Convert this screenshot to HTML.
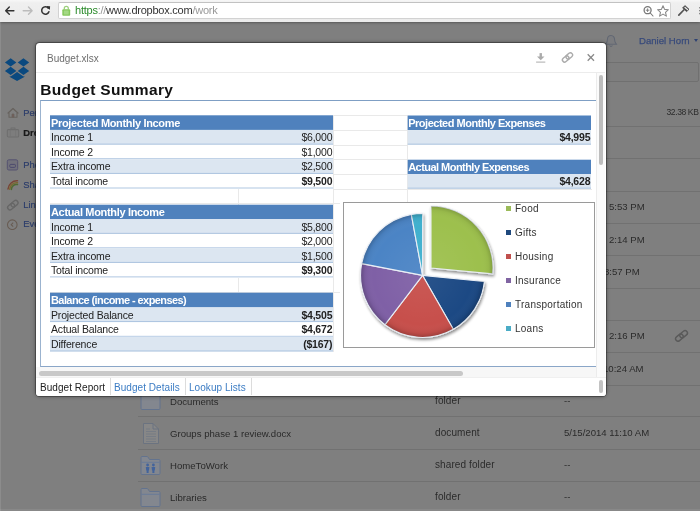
<!DOCTYPE html>
<html>
<head>
<meta charset="utf-8">
<title>Budget.xlsx - Dropbox</title>
<style>
html,body{margin:0;padding:0;}
body{width:700px;height:511px;overflow:hidden;position:relative;background:#fff;font-family:"Liberation Sans",sans-serif;}
.abs{position:absolute;}
#toolbar,#page,#minner{will-change:transform;}
/* ---------- browser toolbar ---------- */
#toolbar{position:absolute;left:0;top:0;width:700px;height:22px;background:linear-gradient(#f7f7f7 0,#efefef 3px,#ebebeb 100%);z-index:30;box-sizing:border-box;box-shadow:0 0 3px rgba(0,0,0,0.55);}
#addr{position:absolute;left:58px;top:2px;width:613px;height:17px;box-sizing:border-box;background:#fff;border:1px solid #d2d2d2;border-top-color:#c2c2c2;border-radius:2px;}
#url{position:absolute;left:75px;top:4px;font-size:11px;letter-spacing:-0.24px;line-height:13px;color:#333;white-space:nowrap;}
#url .g{color:#2a8a2a;}
#url .s{color:#999;}
/* ---------- page under overlay ---------- */
#page{position:absolute;left:0;top:22px;width:700px;height:489px;background:#fff;z-index:1;overflow:hidden;}
#overlay{position:absolute;left:0;top:22px;width:700px;height:489px;background:rgba(0,0,0,0.5);z-index:10;}
.sep{position:absolute;left:138px;width:562px;height:1px;background:#e3e3e3;}
.nav{position:absolute;left:23.300px;font-size:9.400px;line-height:12px;color:#587ad4;-webkit-text-stroke:0.2px;white-space:nowrap;}
.fn{position:absolute;left:170px;font-size:9.6px;line-height:12px;color:#555;white-space:nowrap;margin-top:1px}
.kind{position:absolute;left:435px;font-size:10px;letter-spacing:0.1px;line-height:12px;color:#575757;white-space:nowrap;}
.mod{position:absolute;font-size:9.6px;line-height:12px;color:#575757;white-space:nowrap;}
/* ---------- modal ---------- */
#modal{position:absolute;left:35.850px;top:43.300px;width:569.750px;height:352.300px;background:#fff;border-radius:3.500px;z-index:20;box-shadow:0 0 0 1px rgba(0,0,0,0.3),0 0 4px rgba(0,0,0,0.5);overflow:hidden;}
#minner{position:absolute;left:0.150px;top:0.800px;width:569px;height:352px;}
#mtitle{position:absolute;left:11px;top:8.7px;font-size:10px;line-height:12px;color:#6e6e6e;}
#mhr{position:absolute;left:0;top:28px;width:569px;height:1px;background:#ececec;}
#h1{position:absolute;left:4.300px;top:36px;font-size:15.500px;letter-spacing:0.330px;line-height:19px;font-weight:bold;color:#111;white-space:nowrap;}
#frame{position:absolute;left:4px;top:56px;width:556px;height:267px;box-sizing:border-box;border-top:1px solid #7f9fc4;border-left:1px solid #9bb3cf;border-bottom:1px solid #8aa6c8;}
table.t{position:absolute;border-collapse:collapse;table-layout:fixed;font-size:10.5px;}
table.t td{padding:1.5px 0.5px 0 1px;height:14.6px;line-height:12px;box-sizing:border-box;border-bottom:1px solid #b4c9e3;color:#222;white-space:nowrap;overflow:hidden;letter-spacing:-0.1px;}
table.t tr.h td{background:#4f81bd;color:#fff;font-weight:bold;font-size:11px;letter-spacing:-0.33px;border-bottom:none;padding-top:1px;}
table.t tr.b td{background:#dce6f1;}
table.t td.r{text-align:right;letter-spacing:-0.2px;}
table.t td.bd{font-weight:bold;}
.grid{position:absolute;background:#e9e9e9;}
text.th{font:bold 11px "Liberation Sans",sans-serif;fill:#fff;letter-spacing:-0.33px;}
text.td{font:10.5px "Liberation Sans",sans-serif;fill:#222;letter-spacing:-0.16px;}
text.tv{font:10.5px "Liberation Sans",sans-serif;fill:#222;letter-spacing:-0.2px;text-anchor:end;}
text.tv.b{font-weight:bold;}
#chart{position:absolute;left:307px;top:158px;width:252px;height:146px;box-sizing:border-box;border:1px solid #9a9a9a;background:#fff;}
.lg{position:absolute;left:515px;font-size:10px;letter-spacing:0.25px;line-height:12px;color:#333;white-space:nowrap;}
.lgs{position:absolute;left:506px;width:5.300px;height:5.300px;margin-top:0.200px}
#tabs{position:absolute;left:0;top:333px;width:570px;height:20px;background:#fff;border-top:1px solid #f0f0f0;box-sizing:border-box}
.tab{position:absolute;top:3.500px;letter-spacing:0.05px;font-size:10px;line-height:12px;white-space:nowrap;color:#3b7cc4;}
.tsep{position:absolute;top:0;width:1px;height:17px;background:#dcdcdc;}
</style>
</head>
<body>

<!-- ================= browser toolbar ================= -->
<div id="toolbar">
  <svg class="abs" style="left:0;top:0" width="58" height="22" viewBox="0 0 58 22">
    <g fill="none" stroke-linecap="round" stroke-linejoin="round">
      <path d="M13.900,10.700H6M9.300,7.100L5.700,10.700L9.300,14.300" stroke="#333" stroke-width="1.400"/>
      <path d="M23.200,10.700H31.800M28.500,7.100L32.100,10.700L28.500,14.300" stroke="#bcbcbc" stroke-width="1.400"/>
      <path d="M48.300,8.200A3.700,3.700 0 1 0 48.900,11.700" stroke="#333" stroke-width="1.500"/>
    </g>
    <path d="M46.300,6L50.100,6.200L49.900,10.100Z" fill="#333"/>
  </svg>
  <div id="addr"></div>
  <svg class="abs" style="left:61px;top:4px" width="11" height="14" viewBox="0 0 11 14">
    <path d="M3.3,5.600V4.300A2,2 0 0 1 7.300,4.300V5.600" fill="none" stroke="#9ccf7c" stroke-width="1.300"/>
    <rect x="1.300" y="5.200" width="7.900" height="6.600" rx="1" fill="#86c85c"/>
    <rect x="2.800" y="6.600" width="4.900" height="3.800" rx="0.500" fill="#a4d884"/>
  </svg>
  <div id="url"><span class="g">https</span><span class="s">://</span>www.dropbox.com<span class="s">/work</span></div>
  <svg class="abs" style="left:642px;top:4px" width="58" height="14" viewBox="0 0 58 14">
    <g fill="none" stroke="#777" stroke-width="1.1" stroke-linecap="round">
      <circle cx="5.600" cy="6.200" r="3.500" stroke-width="1.300"/>
      <path d="M8.3,9L11,12"/>
      <path d="M4.2,6.2H7M5.6,4.8V7.6" stroke-width="0.9"/>
      <path d="M21,1.8L22.6,5.4L26.4,5.7L23.5,8.3L24.4,12.1L21,10.1L17.6,12.1L18.5,8.3L15.6,5.7L19.4,5.4Z" stroke="#8a8a8a" stroke-linejoin="round"/>
    </g>
    <g>
      <path d="M36.800,11.200L41.800,6" stroke="#555" stroke-width="1.700" stroke-linecap="round"/>
      <path d="M42.900,1.600L47,5.300L44.600,7.600L40.600,4Z" fill="#4a4a4a" stroke="#4a4a4a" stroke-width="0.800" stroke-linejoin="round"/>
      <path d="M43,3.500L45.500,5.600" stroke="#f4f4f4" stroke-width="1.200" stroke-linecap="round"/>
      <rect x="57" y="3.100" width="1.400" height="1.300" fill="#8a8a8a"/><rect x="57" y="6" width="1.400" height="1.300" fill="#8a8a8a"/><rect x="57" y="8.900" width="1.400" height="1.400" fill="#8a8a8a"/>
    </g>
  </svg>
</div>

<!-- ================= dropbox page (dimmed) ================= -->
<div id="page">
  <!-- logo -->
  <svg class="abs" style="left:4px;top:35px" width="26" height="25" viewBox="0 0 26 25">
    <g fill="#1592ff">
      <path d="M6.650,1.200L12.400,5.500L6.650,9.600L0.900,5.500Z"/>
      <path d="M19.450,1.200L25.200,5.500L19.450,9.600L13.700,5.500Z"/>
      <path d="M6.650,9.800L12.400,13.900L6.650,18L0.900,13.900Z"/>
      <path d="M19.450,9.800L25.200,13.900L19.450,18L13.700,13.900Z"/>
      <path d="M5.800,18.900L6.650,19.400L13.050,15L19.450,19.400L20.300,18.900L20.300,19.900L13.050,24L5.800,19.900Z"/>
    </g>
  </svg>
  <!-- sidebar -->
  <svg class="abs" style="left:6px;top:84px" width="16" height="124" viewBox="0 0 16 124">
    <g fill="none" stroke="#cfc6bd" stroke-width="1.1" stroke-linejoin="round">
      <path d="M1.6,7.4L7,2.6L12.400,7.400" stroke-width="1.400"/>
      <path d="M3,7V11.200H11V7"/>
      <rect x="6" y="8" width="2" height="3.200" fill="#e8b8b0" stroke-width="0.800"/>
      <rect x="1.300" y="23.600" width="11.400" height="7.400" rx="1" fill="#fbfbfb" stroke="#dcdcdc"/>
      <path d="M5,23.600V22H9V23.600" stroke="#dcdcdc"/>
      <path d="M4.300,23.600V31M9.700,23.600V31" stroke="#e6e6e6" stroke-width="0.800"/>
    </g>
    <rect x="1.300" y="53.800" width="10.400" height="10.200" rx="1.500" fill="#e4e3f6" stroke="#a9a4e0" stroke-width="1"/>
    <rect x="3.800" y="58.400" width="5.600" height="3" rx="0.800" fill="none" stroke="#8f89d6" stroke-width="0.900"/>
    <g fill="none" stroke-width="1.500" stroke-linecap="round">
      <path d="M2,83A9,9 0 0 1 11.500,74.800" stroke="#f08a6a"/>
      <path d="M3.700,83.300A7,7 0 0 1 11.500,76.700" stroke="#f6d060"/>
      <path d="M5.400,83.600A5,5 0 0 1 11.500,78.600" stroke="#9ed468"/>
    </g>
    <g fill="none" stroke="#cdcdcd" stroke-width="1.400">
      <rect x="-1" y="-2.400" width="7.600" height="4.800" rx="2.400" transform="translate(3,102.400) rotate(-40)"/>
      <rect x="-1" y="-2.400" width="7.600" height="4.800" rx="2.400" transform="translate(6.400,99.500) rotate(-40)"/>
    </g>
    <circle cx="6.300" cy="118.700" r="4.800" fill="none" stroke="#d0b8a6" stroke-width="1.100"/>
    <path d="M7.200,116.700L5.200,118.700L7.200,120.700" fill="none" stroke="#d0b8a6" stroke-width="1.100"/>
  </svg>
  <div class="nav" style="top:85.300px">Personal</div>
  <div class="nav" style="top:105px;color:#333;font-weight:bold">Dropbox</div>
  <div class="nav" style="top:136.500px">Photos</div>
  <div class="nav" style="top:156.500px">Sharing</div>
  <div class="nav" style="top:176.500px">Links</div>
  <div class="nav" style="top:196px">Events</div>

  <!-- header right -->
  <svg class="abs" style="left:604px;top:12px" width="14" height="14" viewBox="0 0 14 14">
    <path d="M7,1.5C4.4,1.5 3.4,3.6 3.4,5.8C3.4,8.2 2.4,9.2 1.6,10.2H12.4C11.6,9.2 10.6,8.2 10.6,5.8C10.6,3.6 9.6,1.5 7,1.5Z" fill="#f4f7fc" stroke="#c4cfe6" stroke-width="1.100"/>
    <path d="M5.6,11.4A1.5,1.5 0 0 0 8.4,11.4" fill="none" stroke="#c4cfe6" stroke-width="1.100"/>
  </svg>
  <div class="abs" style="left:639px;top:13px;font-size:9.6px;line-height:12px;color:#7094f4;-webkit-text-stroke:0.250px #7094f4;white-space:nowrap;">Daniel Horn</div>
  <div class="abs" style="left:694px;top:17px;width:0;height:0;border-left:2.6px solid transparent;border-right:2.6px solid transparent;border-top:3.4px solid #5f86e6;"></div>
  <div class="abs" style="left:560px;top:40px;width:139px;height:20px;box-sizing:border-box;border:1px solid #e0e0e0;border-radius:2px;background:#fcfcfc"></div>
  <div class="mod" style="left:666.500px;top:84px;font-size:8.600px;letter-spacing:-0.420px;color:#5a5a5a">32.38 KB</div>

  <!-- rows -->
  <div class="sep" style="top:104px"></div>
  <div class="sep" style="top:136px"></div>
  <div class="sep" style="top:169px"></div>
  <div class="sep" style="top:201px"></div>
  <div class="sep" style="top:233px"></div>
  <div class="sep" style="top:266px"></div>
  <div class="sep" style="top:298px"></div>
  <div class="sep" style="top:330px"></div>
  <div class="sep" style="top:363px"></div>
  <div class="sep" style="top:394px"></div>
  <div class="sep" style="top:427px"></div>
  <div class="sep" style="top:459px"></div>

  <div class="mod" style="left:609px;top:179px">5:53 PM</div>
  <div class="mod" style="left:609px;top:212px">2:14 PM</div>
  <div class="mod" style="left:604px;top:244px">8:57 PM</div>
  <div class="mod" style="left:600px;top:276px">--</div>
  <div class="mod" style="left:609px;top:308px">2:16 PM</div>
  <div class="mod" style="left:603px;top:341px">10:24 AM</div>
  <svg class="abs" style="left:674px;top:307px" width="15" height="14" viewBox="0 0 15 14">
    <g fill="none" stroke="#b4b4b4" stroke-width="1.5">
      <rect x="-4.2" y="-2.4" width="8.4" height="4.8" rx="2.4" transform="translate(5.4,8.6) rotate(-40)"/>
      <rect x="-4.2" y="-2.4" width="8.4" height="4.8" rx="2.4" transform="translate(9.6,5.2) rotate(-40)"/>
    </g>
  </svg>

  <!-- file rows -->
  <div class="fn" style="top:373px">Documents</div>
  <div class="fn" style="top:405px">Groups phase 1 review.docx</div>
  <div class="fn" style="top:437px">HomeToWork</div>
  <div class="fn" style="top:469px">Libraries</div>
  <div class="kind" style="top:373px">folder</div>
  <div class="kind" style="top:405px">document</div>
  <div class="kind" style="top:437px">shared folder</div>
  <div class="kind" style="top:469px">folder</div>
  <div class="mod" style="left:564px;top:373px">--</div>
  <div class="mod" style="left:564px;top:405px">5/15/2014 11:10 AM</div>
  <div class="mod" style="left:564px;top:437px">--</div>
  <div class="mod" style="left:564px;top:469px">--</div>
</div>
<div id="overlay"></div>
<svg class="abs" style="left:140px;top:382px;z-index:12" width="22" height="130" viewBox="0 0 22 130">
  <g fill="#83878f" stroke="#63738e" stroke-width="1">
    <path d="M1,4.500V26.500Q1,27.500 2,27.500H19Q20,27.500 20,26.500V8.500Q20,7.500 19,7.500H9.500L8,5Q7.600,4.500 7,4.500H2Q1,4.500 1,5.500Z"/>
    <path d="M1,5.500V21.500Q1,22.500 2,22.500H19Q20,22.500 20,21.500V8.500Q20,7.500 19,7.500H9.500L8,5Q7.600,4.500 7,4.500H2Q1,4.500 1,5.500Z" transform="translate(0,70)"/>
    <path d="M1,5.500V21.500Q1,22.500 2,22.500H19Q20,22.500 20,21.500V8.500Q20,7.500 19,7.500H9.500L8,5Q7.600,4.500 7,4.500H2Q1,4.500 1,5.500Z" transform="translate(0,102)"/>
  </g>
  <path d="M1.500,80.300H19.500M1.500,112.300H19.500" stroke="#66799a" stroke-width="0.900" fill="none"/>
  <path d="M3.500,41.500H13L18.500,47V61.500H3.500Z" fill="#878787" stroke="#6b7380" stroke-width="1"/>
  <path d="M13,41.500V47H18.500" fill="none" stroke="#6b7380" stroke-width="1"/>
  <path d="M6,47H10M6,49.500H16M6,52H16M6,54.500H16M6,57H16M6,59.500H16" stroke="#747a84" stroke-width="0.900" fill="none"/>
  <g fill="#42639c">
    <circle cx="7.600" cy="83" r="1.400"/><path d="M5.800,85H9.400L9,88.500H8.600V91H6.600V88.500H6.200Z"/>
    <circle cx="13.400" cy="83" r="1.400"/><path d="M11.600,85H15.200L14.800,88.500H14.400V91H12.400V88.500H12Z"/>
  </g>
</svg>

<div class="abs" style="left:0;top:22px;width:1px;height:489px;background:rgba(255,255,255,0.1);z-index:11"></div>
<div class="abs" style="left:0;top:509px;width:700px;height:2px;background:rgba(255,255,255,0.07);z-index:11"></div>

<!-- ================= preview modal ================= -->
<div id="modal"><div id="minner">
  <div id="mtitle">Budget.xlsx</div>
  <svg class="abs" style="left:498px;top:7px" width="64" height="14" viewBox="0 0 64 14">
    <g fill="none" stroke="#ababab" stroke-width="1.2">
      <path d="M2.100,11.100H11.300" stroke-width="1"/>
      <path d="M6.750,2.100V6" stroke-width="2.400"/>
      <path d="M3,5.400L6.750,9.200L10.500,5.400Z" fill="#ababab" stroke="none"/>
      <rect x="-3.600" y="-2.200" width="7.200" height="4.400" rx="2.200" stroke-width="1.400" transform="translate(31.700,8) rotate(-40)"/>
      <rect x="-3.600" y="-2.200" width="7.200" height="4.400" rx="2.200" stroke-width="1.400" transform="translate(35.300,4.900) rotate(-40)"/>
      <path d="M53.700,3.300L60,9.700M60,3.300L53.700,9.700" stroke="#8a8a8a" stroke-width="1.300"/>
    </g>
  </svg>
  <div id="mhr"></div>
  <div id="h1">Budget Summary</div>
  <div id="frame"></div>

  <!-- faint sheet gridlines -->
  <div class="grid" style="left:297px;top:71px;width:1px;height:237px"></div>
  <div class="grid" style="left:371px;top:71px;width:1px;height:87px"></div>
  <div class="grid" style="left:14px;top:159px;width:290px;height:1px"></div>
  <div class="grid" style="left:14px;top:248px;width:290px;height:1px"></div>
  <div class="grid" style="left:202px;top:145px;width:1px;height:16px"></div>
  <div class="grid" style="left:202px;top:234px;width:1px;height:15px"></div>
  <div class="grid" style="left:298px;top:71px;width:74px;height:1px"></div>
  <div class="grid" style="left:298px;top:86px;width:74px;height:1px"></div>
  <div class="grid" style="left:298px;top:101px;width:74px;height:1px"></div>
  <div class="grid" style="left:298px;top:115px;width:74px;height:1px"></div>
  <div class="grid" style="left:298px;top:130px;width:74px;height:1px"></div>
  <div class="grid" style="left:298px;top:145px;width:258px;height:1px"></div>

  <!-- tables -->
  <!-- TABLES-START -->
  <svg class="abs" style="left:0;top:0" width="569" height="351" viewBox="0 0 569 351">
    <rect x="14" y="71.3" width="283" height="14.63" fill="#4f81bd"/>
    <text class="th" x="15" y="82.6">Projected Monthly Income</text>
    <rect x="14" y="85.93" width="283" height="14.63" fill="#dce6f1"/>
    <rect x="14" y="99.66" width="283" height="0.9" fill="#a7c0de"/>
    <text class="td" x="15" y="97.23">Income 1</text>
    <text class="tv" x="296.3" y="97.23">$6,000</text>
    <rect x="14" y="114.29" width="283" height="0.9" fill="#a7c0de"/>
    <text class="td" x="15" y="111.86">Income 2</text>
    <text class="tv" x="296.3" y="111.86">$1,000</text>
    <rect x="14" y="115.19" width="283" height="14.63" fill="#dce6f1"/>
    <rect x="14" y="128.92" width="283" height="0.9" fill="#a7c0de"/>
    <text class="td" x="15" y="126.49">Extra income</text>
    <text class="tv" x="296.3" y="126.49">$2,500</text>
    <rect x="14" y="143.55" width="283" height="0.9" fill="#a7c0de"/>
    <text class="td" x="15" y="141.12">Total income</text>
    <text class="tv b" x="296.3" y="141.12">$9,500</text>
    <rect x="14" y="160.7" width="283" height="14.53" fill="#4f81bd"/>
    <text class="th" x="15" y="172">Actual Monthly Income</text>
    <rect x="14" y="175.23" width="283" height="14.53" fill="#dce6f1"/>
    <rect x="14" y="188.86" width="283" height="0.9" fill="#a7c0de"/>
    <text class="td" x="15" y="186.53">Income 1</text>
    <text class="tv" x="296.3" y="186.53">$5,800</text>
    <rect x="14" y="203.39" width="283" height="0.9" fill="#a7c0de"/>
    <text class="td" x="15" y="201.06">Income 2</text>
    <text class="tv" x="296.3" y="201.06">$2,000</text>
    <rect x="14" y="204.29" width="283" height="14.53" fill="#dce6f1"/>
    <rect x="14" y="217.92" width="283" height="0.9" fill="#a7c0de"/>
    <text class="td" x="15" y="215.59">Extra income</text>
    <text class="tv" x="296.3" y="215.59">$1,500</text>
    <rect x="14" y="232.45" width="283" height="0.9" fill="#a7c0de"/>
    <text class="td" x="15" y="230.12">Total income</text>
    <text class="tv b" x="296.3" y="230.12">$9,300</text>
    <rect x="14" y="248.7" width="283" height="14.68" fill="#4f81bd"/>
    <text class="th" style="letter-spacing:-0.59px" x="15" y="260">Balance (income - expenses)</text>
    <rect x="14" y="263.38" width="283" height="14.68" fill="#dce6f1"/>
    <rect x="14" y="277.16" width="283" height="0.9" fill="#a7c0de"/>
    <text class="td" x="15" y="274.68">Projected Balance</text>
    <text class="tv b" x="296.3" y="274.68">$4,505</text>
    <rect x="14" y="291.84" width="283" height="0.9" fill="#a7c0de"/>
    <text class="td" x="15" y="289.36">Actual Balance</text>
    <text class="tv b" x="296.3" y="289.36">$4,672</text>
    <rect x="14" y="292.74" width="283" height="14.68" fill="#dce6f1"/>
    <rect x="14" y="306.52" width="283" height="0.9" fill="#a7c0de"/>
    <text class="td" x="15" y="304.04">Difference</text>
    <text class="tv b" x="296.3" y="304.04">($167)</text>
    <rect x="371.7" y="71.5" width="183.3" height="14.55" fill="#4f81bd"/>
    <text class="th" style="letter-spacing:-0.48px" x="372.2" y="82.8">Projected Monthly Expenses</text>
    <rect x="371.7" y="86.05" width="183.3" height="14.55" fill="#dce6f1"/>
    <rect x="371.7" y="99.7" width="183.3" height="0.9" fill="#a7c0de"/>
    <text class="tv b" x="554.3" y="97.35">$4,995</text>
    <rect x="371.7" y="115.7" width="183.3" height="14.45" fill="#4f81bd"/>
    <text class="th" style="letter-spacing:-0.54px" x="372.2" y="127">Actual Monthly Expenses</text>
    <rect x="371.7" y="130.15" width="183.3" height="14.45" fill="#dce6f1"/>
    <rect x="371.7" y="143.7" width="183.3" height="0.9" fill="#a7c0de"/>
    <text class="tv b" x="554.3" y="141.45">$4,628</text>
  </svg>
  <!-- TABLES-END -->

  <!-- chart -->
  <div id="chart"></div>
  <svg class="abs" style="left:0;top:0" width="569" height="351" viewBox="36 44 569 351">
    <defs>
      <filter id="ds" x="-20%" y="-20%" width="140%" height="140%">
        <feGaussianBlur in="SourceAlpha" stdDeviation="1.400"/>
        <feOffset dx="1" dy="1.500"/>
        <feComponentTransfer><feFuncA type="linear" slope="0.450"/></feComponentTransfer>
        <feMerge><feMergeNode/><feMergeNode in="SourceGraphic"/></feMerge>
      </filter>
      <clipPath id="cpMain"><path d="M422.600,275.400L484.300,281.500A62,62 0 1 1 422.600,213.400Z"/></clipPath>
      <radialGradient id="bev1" gradientUnits="userSpaceOnUse" cx="422.600" cy="275.400" r="62">
        <stop offset="0" stop-color="#fff" stop-opacity="0.060"/><stop offset="0.800" stop-color="#fff" stop-opacity="0"/><stop offset="0.930" stop-color="#000" stop-opacity="0.050"/><stop offset="1" stop-color="#000" stop-opacity="0.220"/>
      </radialGradient>
      <radialGradient id="bev2" gradientUnits="userSpaceOnUse" cx="431" cy="268" r="62">
        <stop offset="0" stop-color="#fff" stop-opacity="0.060"/><stop offset="0.800" stop-color="#fff" stop-opacity="0"/><stop offset="0.930" stop-color="#000" stop-opacity="0.040"/><stop offset="1" stop-color="#000" stop-opacity="0.180"/>
      </radialGradient>
    </defs>
    <g filter="url(#ds)" stroke="#e9eef5" stroke-width="1.100" stroke-linejoin="round">
      <path d="M422.6,275.4L484.3,281.5A62,62 0 0 1 453.3,329.3Z" fill="#1d4a84"/>
      <path d="M422.6,275.4L453.3,329.3A62,62 0 0 1 385.0,324.7Z" fill="#c7504b"/>
      <path d="M422.6,275.4L385.0,324.7A62,62 0 0 1 361.7,263.6Z" fill="#7f61a6"/>
      <path d="M422.6,275.4L361.7,263.6A62,62 0 0 1 411.3,214.4Z" fill="#4c84c5"/>
      <path d="M422.6,275.4L411.3,214.4A62,62 0 0 1 422.6,213.4Z" fill="#41b0ce"/>
      <path d="M431.0,268.0L431.0,206.0A62,62 0 0 1 492.7,273.9Z" fill="#9dc04e"/>
    </g>
    <circle cx="422.600" cy="275.400" r="61.500" fill="url(#bev1)" clip-path="url(#cpMain)"/>
    <path d="M431.0,268.0L431.0,206.0A62,62 0 0 1 492.7,273.9Z" fill="url(#bev2)"/>
  </svg>
  <div class="lgs" style="top:162px;left:470px;background:#9bbb59"></div>
  <div class="lgs" style="top:186px;left:470px;background:#1f497d"></div>
  <div class="lgs" style="top:210px;left:470px;background:#c0504d"></div>
  <div class="lgs" style="top:234px;left:470px;background:#8064a2"></div>
  <div class="lgs" style="top:258px;left:470px;background:#4f81bd"></div>
  <div class="lgs" style="top:282px;left:470px;background:#4bacc6"></div>
  <div class="lg" style="top:159px;left:479px">Food</div>
  <div class="lg" style="top:183px;left:479px">Gifts</div>
  <div class="lg" style="top:207px;left:479px">Housing</div>
  <div class="lg" style="top:231px;left:479px">Insurance</div>
  <div class="lg" style="top:255px;left:479px">Transportation</div>
  <div class="lg" style="top:279px;left:479px">Loans</div>

  <!-- scrollbars -->
  <div class="abs" style="left:560px;top:29px;width:9px;height:322px;background:#fbfbfb;border-left:1px solid #ececec;box-sizing:border-box"></div>
  <div class="abs" style="left:563.300px;top:31px;width:3.800px;height:90px;background:#bdbdbd;border-radius:2px"></div>
  <div class="abs" style="left:0;top:323px;width:560px;height:10px;background:#f7f7f7;"></div>
  <div class="abs" style="left:3px;top:326.500px;width:424px;height:5px;background:#c8c8c8;border-radius:2.500px"></div>

  <!-- sheet tabs -->
  <div id="tabs">
    <div class="tab" style="left:4px;color:#222">Budget Report</div>
    <div class="tsep" style="left:74px"></div>
    <div class="tab" style="left:78px">Budget Details</div>
    <div class="tsep" style="left:148.500px"></div>
    <div class="tab" style="left:153px">Lookup Lists</div>
    <div class="tsep" style="left:215px"></div>
  </div>
  <div class="abs" style="left:563px;top:336px;width:4.400px;height:13px;background:#c2c2c2;border-radius:2.200px;"></div>
</div></div>

</body>
</html>
